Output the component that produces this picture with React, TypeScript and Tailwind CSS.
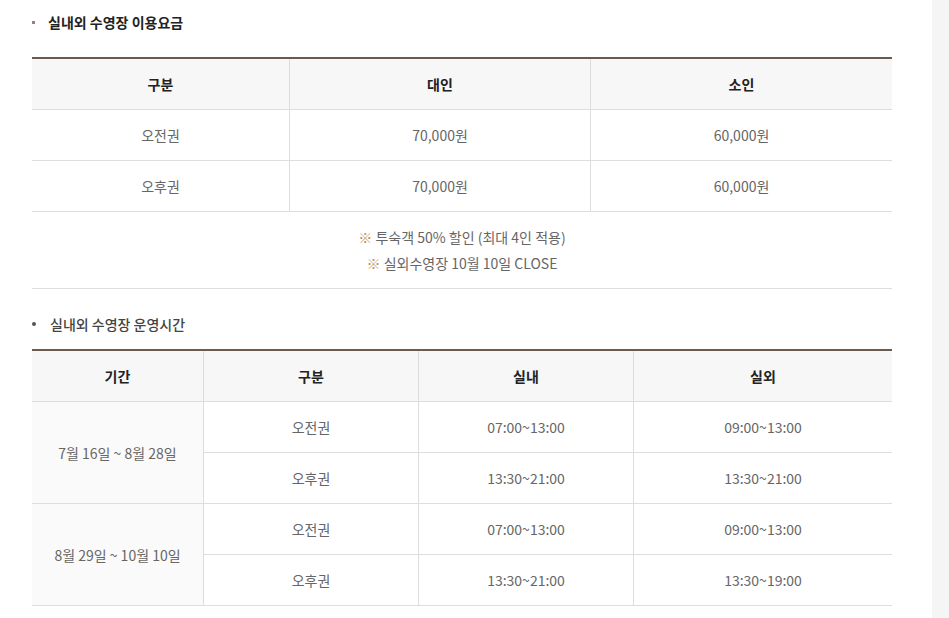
import React from "react";

const font = { fontFamily: '"Noto Sans CJK KR", "Noto Sans", sans-serif' };

const priceRows = [
  { name: "오전권", adult: "70,000원", child: "60,000원" },
  { name: "오후권", adult: "70,000원", child: "60,000원" },
];

const hourGroups = [
  {
    period: "7월 16일 ~ 8월 28일",
    rows: [
      { name: "오전권", inside: "07:00~13:00", outside: "09:00~13:00" },
      { name: "오후권", inside: "13:30~21:00", outside: "13:30~21:00" },
    ],
  },
  {
    period: "8월 29일 ~ 10월 10일",
    rows: [
      { name: "오전권", inside: "07:00~13:00", outside: "09:00~13:00" },
      { name: "오후권", inside: "13:30~21:00", outside: "13:30~19:00" },
    ],
  },
];

const th =
  "bg-[#f7f7f7] border-b border-[#dddddd] py-[13px] text-[14px] leading-6 font-bold text-[#222] text-center";
const td =
  "border-b border-[#dddddd] py-[13px] text-[14px] leading-6 text-[#666] text-center";

export default function App() {
  return (
    <div className="flex min-h-screen bg-white" style={font}>
      <div className="w-[932px] pl-8 pt-3 pb-3">
        {/* 이용요금 */}
        <h3 className="flex items-center h-5 text-[14px] font-bold text-[#222]">
          <span className="w-[3px] h-[3px] bg-[#9a7a8c] mr-[13px]" />
          실내외 수영장 이용요금
        </h3>
        <table className="w-[860px] mt-[25px] border-separate border-spacing-0 border-t-2 border-[#6b5b4f] table-fixed">
          <colgroup>
            <col className="w-[258px]" />
            <col className="w-[301px]" />
            <col />
          </colgroup>
          <thead>
            <tr>
              <th className={`${th} border-r`}>구분</th>
              <th className={`${th} border-r`}>대인</th>
              <th className={th}>소인</th>
            </tr>
          </thead>
          <tbody>
            {priceRows.map((r) => (
              <tr key={r.name}>
                <td className={`${td} border-r`}>{r.name}</td>
                <td className={`${td} border-r`}>{r.adult}</td>
                <td className={td}>{r.child}</td>
              </tr>
            ))}
            <tr>
              <td colSpan={3} className="border-b border-[#dddddd] py-3 text-[14px] leading-[26px] text-[#666] text-center">
                <p>
                  <span className="text-[#c0905f]">※</span> 투숙객 50% 할인 (최대 4인 적용)
                </p>
                <p>
                  <span className="text-[#c0905f]">※</span> 실외수영장 10월 10일 CLOSE
                </p>
              </td>
            </tr>
          </tbody>
        </table>

        {/* 운영시간 */}
        <h3 className="flex items-center h-5 mt-[25px] text-[14px] font-medium text-[#444]">
          <span className="w-1 h-1 rounded-full bg-[#555] mr-[14px]" />
          실내외 수영장 운영시간
        </h3>
        <table className="w-[860px] mt-[15px] border-separate border-spacing-0 border-t-2 border-[#6b5b4f] table-fixed">
          <colgroup>
            <col className="w-[172px]" />
            <col className="w-[215px]" />
            <col className="w-[215px]" />
            <col />
          </colgroup>
          <thead>
            <tr>
              <th className={`${th} border-r`}>기간</th>
              <th className={`${th} border-r`}>구분</th>
              <th className={`${th} border-r`}>실내</th>
              <th className={th}>실외</th>
            </tr>
          </thead>
          <tbody>
            {hourGroups.map((g) =>
              g.rows.map((r, i) => (
                <tr key={g.period + r.name}>
                  {i === 0 && (
                    <td rowSpan={2} className={`${td} border-r bg-[#fafafa] text-[#444]`}>
                      {g.period}
                    </td>
                  )}
                  <td className={`${td} border-r`}>{r.name}</td>
                  <td className={`${td} border-r`}>{r.inside}</td>
                  <td className={td}>{r.outside}</td>
                </tr>
              ))
            )}
          </tbody>
        </table>
      </div>
      <div className="ml-auto w-[17px] bg-[#f5f5f5]" />
    </div>
  );
}
